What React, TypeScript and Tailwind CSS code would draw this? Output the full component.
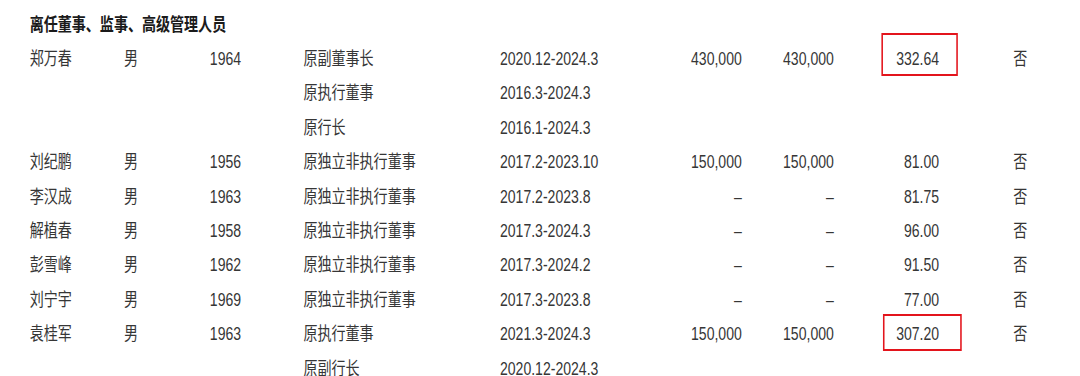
type Row = {
  name?: string;
  gender?: string;
  year?: string;
  role: string;
  period: string;
  s1?: string;
  s2?: string;
  pay?: string;
  paid?: string;
  boxed?: 1 | 2;
};

const rows: Row[] = [
  { name: '郑万春', gender: '男', year: '1964', role: '原副董事长', period: '2020.12-2024.3', s1: '430,000', s2: '430,000', pay: '332.64', paid: '否', boxed: 1 },
  { role: '原执行董事', period: '2016.3-2024.3' },
  { role: '原行长', period: '2016.1-2024.3' },
  { name: '刘纪鹏', gender: '男', year: '1956', role: '原独立非执行董事', period: '2017.2-2023.10', s1: '150,000', s2: '150,000', pay: '81.00', paid: '否' },
  { name: '李汉成', gender: '男', year: '1963', role: '原独立非执行董事', period: '2017.2-2023.8', s1: '–', s2: '–', pay: '81.75', paid: '否' },
  { name: '解植春', gender: '男', year: '1958', role: '原独立非执行董事', period: '2017.3-2024.3', s1: '–', s2: '–', pay: '96.00', paid: '否' },
  { name: '彭雪峰', gender: '男', year: '1962', role: '原独立非执行董事', period: '2017.3-2024.2', s1: '–', s2: '–', pay: '91.50', paid: '否' },
  { name: '刘宁宇', gender: '男', year: '1969', role: '原独立非执行董事', period: '2017.3-2023.8', s1: '–', s2: '–', pay: '77.00', paid: '否' },
  { name: '袁桂军', gender: '男', year: '1963', role: '原执行董事', period: '2021.3-2024.3', s1: '150,000', s2: '150,000', pay: '307.20', paid: '否', boxed: 2 },
  { role: '原副行长', period: '2020.12-2024.3' },
];

export default function App() {
  return (
    <div className="w-[1080px] h-[376px] overflow-hidden bg-white">
      {/* the source table is horizontally condensed, so squeeze the whole sheet */}
      <div
        className="w-[1385px] origin-top-left scale-x-[0.78] pt-2 pl-[38px] text-[18px] leading-[27px] text-[#363636]"
        style={{ fontFamily: '"Liberation Sans", "Noto Sans CJK SC", sans-serif' }}
      >
        <div className="h-[34.4px] flex items-center font-bold text-[#1a1a1a]">
          离任董事、监事、高级管理人员
        </div>

        {rows.map((r, i) => (
          <div
            key={i}
            className="h-[34.4px] grid grid-cols-[121px_110px_120px_252px_219px_91px_118px_135px_auto] items-center whitespace-nowrap"
          >
            <span>{r.name}</span>
            <span>{r.gender}</span>
            <span>{r.year}</span>
            <span>{r.role}</span>
            <span>{r.period}</span>
            <span className="text-right">{r.s1}</span>
            <span className="text-right">{r.s2}</span>
            <span className="text-right">
              <span className="relative inline-block">
                {r.pay}
                {r.boxed === 1 && (
                  <span className="absolute -top-[13px] -bottom-[3px] -left-[19px] -right-[24px] border-2 border-[#e3141c]" />
                )}
                {r.boxed === 2 && (
                  <span className="absolute -top-[7px] -bottom-[3px] -left-[17px] -right-[29px] border-2 border-[#e3141c]" />
                )}
              </span>
            </span>
            <span className="pl-[95px]">{r.paid}</span>
          </div>
        ))}
      </div>
    </div>
  );
}
